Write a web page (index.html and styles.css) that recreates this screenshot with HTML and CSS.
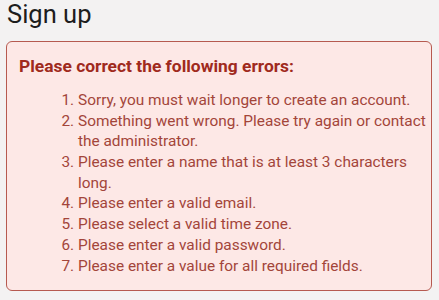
FILE: index.html
```html
<!DOCTYPE html>
<html>
<head>
<meta charset="utf-8">
<link rel="stylesheet" href="styles.css">
</head>
<body>
<h1 class="title">Sign up</h1>
<div class="errors">
  <h2 class="errors-title">Please correct the following errors:</h2>
  <ol class="errors-list">
    <li>Sorry, you must wait longer to create an account.</li>
    <li>Something went wrong. Please try again or contact the administrator.</li>
    <li>Please enter a name that is at least 3 characters long.</li>
    <li>Please enter a valid email.</li>
    <li>Please select a valid time zone.</li>
    <li>Please enter a valid password.</li>
    <li>Please enter a value for all required fields.</li>
  </ol>
</div>
</body>
</html>
```

FILE: styles.css
```css
html, body {
  margin: 0;
  padding: 0;
  background: #f3f2f2;
  font-family: Roboto, "Liberation Sans", sans-serif;
}
body {
  padding: 0 7px 0 6px;
}
.title {
  margin: 0;
  padding: 0 0 0 1px;
  font-size: 25.5px;
  font-weight: 400;
  line-height: 28px;
  color: #1d1d1d;
  height: 41px;
}
.errors {
  background: #fde8e6;
  border: 1.5px solid #b65a50;
  border-radius: 6px;
  height: 250px;
  box-sizing: border-box;
  padding: 11.6px 3px 0 12px;
}
.errors-title {
  margin: 0;
  font-size: 17.4px;
  font-weight: 700;
  line-height: 24px;
  color: #a02a1d;
}
.errors-list {
  margin: 12.3px 0 0 0;
  padding-left: 59px;
  font-size: 15.4px;
  line-height: 20.7px;
  color: #a3453a;
}
```
